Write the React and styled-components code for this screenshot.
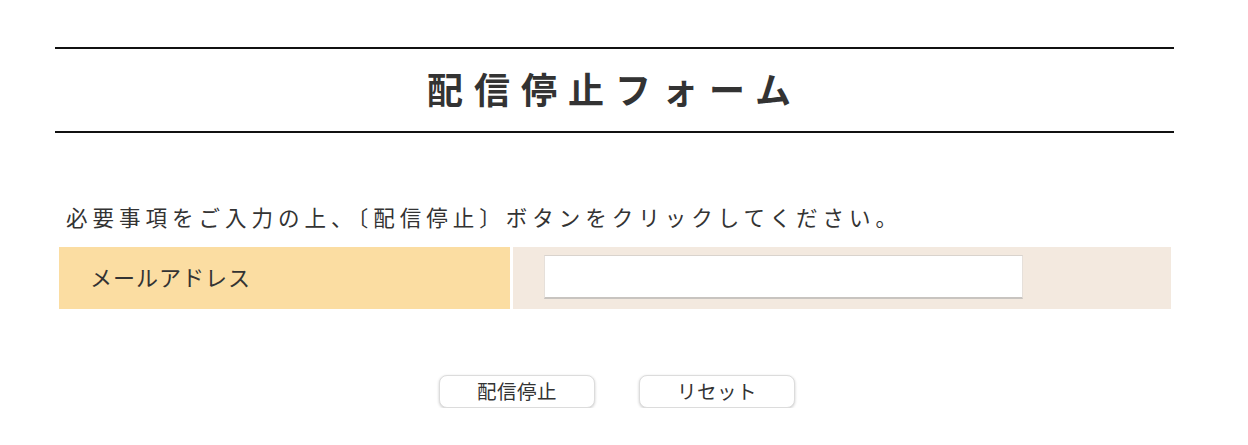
import React from "react";
import styled, { createGlobalStyle } from "styled-components";

const Global = createGlobalStyle`
  html, body { margin: 0; padding: 0; background: #fff; }
  body { font-family: "Noto Sans CJK JP", "Noto Sans", sans-serif; color: #333; }
`;

const Page = styled.div`
  width: 1119px;
  margin: 0 0 0 55px;
  padding-top: 47px;
`;

const TitleBar = styled.h1`
  margin: 0;
  border-top: 2px solid #111;
  border-bottom: 2px solid #111;
  height: 82px;
  box-sizing: content-box;
  display: flex;
  align-items: center;
  justify-content: center;
  padding: 0 0 5px 0;
  height: 77px;
  font-size: 36px;
  font-weight: 700;
  letter-spacing: 11px;
  color: #333;
  line-height: 1;
`;

const Lead = styled.p`
  margin: 68px 0 0 11px;
  font-size: 21.5px;
  letter-spacing: 5px;
  line-height: 32px;
  color: #333;
`;

const Row = styled.div`
  margin: 14px 3px 0 4px;
  display: flex;
  gap: 3px;
  height: 62px;
`;

const LabelCell = styled.div`
  width: 451px;
  flex: none;
  background: #fbdda2;
  display: flex;
  align-items: center;
  padding: 0 0 5px 31px;
  box-sizing: border-box;
  font-size: 22px;
  letter-spacing: 1px;
  color: #333;
`;

const InputCell = styled.div`
  flex: 1;
  background: #f3e9df;
  padding: 8px 0 0 31px;
  box-sizing: border-box;
`;

const TextInput = styled.input`
  display: block;
  width: 479px;
  height: 44px;
  box-sizing: border-box;
  border: 1px solid #e6e0da;
  border-top: 1px solid #d9d3cd;
  border-bottom: 2px solid #c8c4c0;
  background: #fff;
  outline: none;
  font-size: 18px;
  padding: 0 8px;
`;

const Buttons = styled.div`
  display: flex;
  justify-content: center;
  gap: 44px;
  margin-top: 66px;
  padding-left: 5px;
`;

const Button = styled.button`
  width: 156px;
  height: 33px;
  border: 1px solid #dcdcdc;
  border-radius: 8px;
  background: #fff;
  box-shadow: 0 1px 3px rgba(0, 0, 0, 0.2);
  font-family: "Noto Sans CJK JP", "Noto Sans", sans-serif;
  font-size: 19.5px;
  letter-spacing: 0.5px;
  color: #333;
  padding: 0 0 2px 0;
  line-height: 1;
  cursor: pointer;
`;

export default function App() {
  return (
    <>
      <Global />
      <Page>
        <TitleBar>配信停止フォーム</TitleBar>
        <Lead>必要事項をご入力の上、〔配信停止〕ボタンをクリックしてください。</Lead>
        <Row>
          <LabelCell>メールアドレス</LabelCell>
          <InputCell>
            <TextInput type="text" />
          </InputCell>
        </Row>
        <Buttons>
          <Button type="button">配信停止</Button>
          <Button type="button">リセット</Button>
        </Buttons>
      </Page>
    </>
  );
}
